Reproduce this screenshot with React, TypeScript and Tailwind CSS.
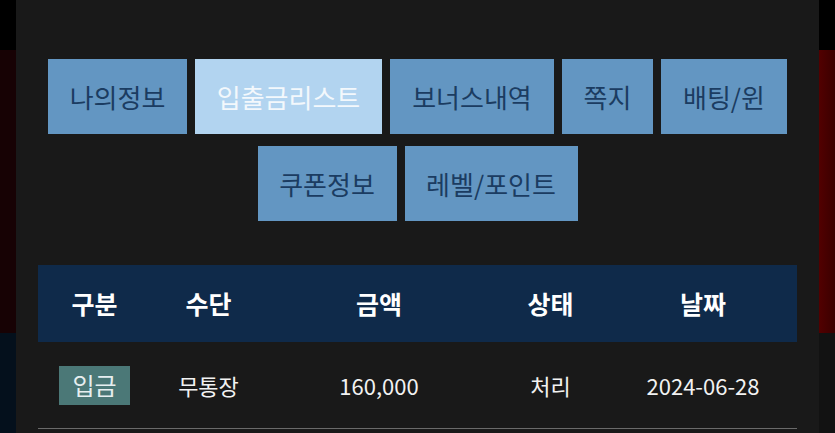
const TABS = [
  { label: '나의정보', w: 'w-[139px]' },
  { label: '입출금리스트', w: 'w-[187px]', active: true },
  { label: '보너스내역', w: 'w-[164px]' },
  { label: '쪽지', w: 'w-[91px]' },
  { label: '배팅/윈', w: 'w-[126px]' },
]
const TABS2 = [
  { label: '쿠폰정보', w: 'w-[139px]' },
  { label: '레벨/포인트', w: 'w-[173px]' },
]

function Tab({ label, w, active }: { label: string; w: string; active?: boolean }) {
  return (
    <button
      className={
        (active
          ? 'bg-[#b2d4f0] text-[#f3f8fc] '
          : 'bg-[#6396c2] text-[#1b3c61] ') +
        'h-[75px] shrink-0 flex items-center justify-center text-[26px] ' +
        w
      }
    >
      {label}
    </button>
  )
}

export default function App() {
  return (
    <div
      className="flex w-[835px] h-[433px] overflow-hidden bg-[#141414]"
      style={{ fontFamily: '"Noto Sans CJK KR", "Noto Sans", sans-serif' }}
    >
      {/* left strip */}
      <div className="w-[16px] flex flex-col shrink-0">
        <div className="h-[50px] bg-black" />
        <div className="h-[283px] bg-[#170204]" />
        <div className="flex-1 bg-[#04101c]" />
      </div>

      {/* panel */}
      <div className="w-[803px] shrink-0 bg-[#191919] pt-[59px] px-[22px]">
        <div className="flex justify-center gap-[8px]">
          {TABS.map(t => (
            <Tab key={t.label} {...t} />
          ))}
        </div>
        <div className="flex justify-center gap-[8px] mt-[12px]">
          {TABS2.map(t => (
            <Tab key={t.label} {...t} />
          ))}
        </div>

        <div className="mt-[44px] w-[759px]">
          <div className="grid grid-cols-[113px_115px_226px_117px_188px] h-[77px] items-center bg-[#0f2a4a] text-white font-bold text-[25px]">
            <div className="text-center">구분</div>
            <div className="text-center">수단</div>
            <div className="text-center">금액</div>
            <div className="text-center">상태</div>
            <div className="text-center">날짜</div>
          </div>
          <div className="grid grid-cols-[113px_115px_226px_117px_188px] h-[87px] items-center border-b border-[#6a6a6a] text-[#f2f2f2] text-[22px]">
            <div className="flex justify-center">
              <span className="w-[71px] h-[39px] flex items-center justify-center bg-[#4b7877] text-[#e6eef0] text-[24px]">입금</span>
            </div>
            <div className="text-center">무통장</div>
            <div className="text-center">160,000</div>
            <div className="text-center">처리</div>
            <div className="text-center">2024-06-28</div>
          </div>
        </div>
      </div>

      {/* right strip */}
      <div className="flex-1 flex flex-col">
        <div className="h-[50px] bg-black" />
        <div className="h-[283px] bg-gradient-to-r from-[#520000] to-[#3a0000]" />
        <div className="flex-1 bg-[#121212]" />
      </div>
    </div>
  )
}
